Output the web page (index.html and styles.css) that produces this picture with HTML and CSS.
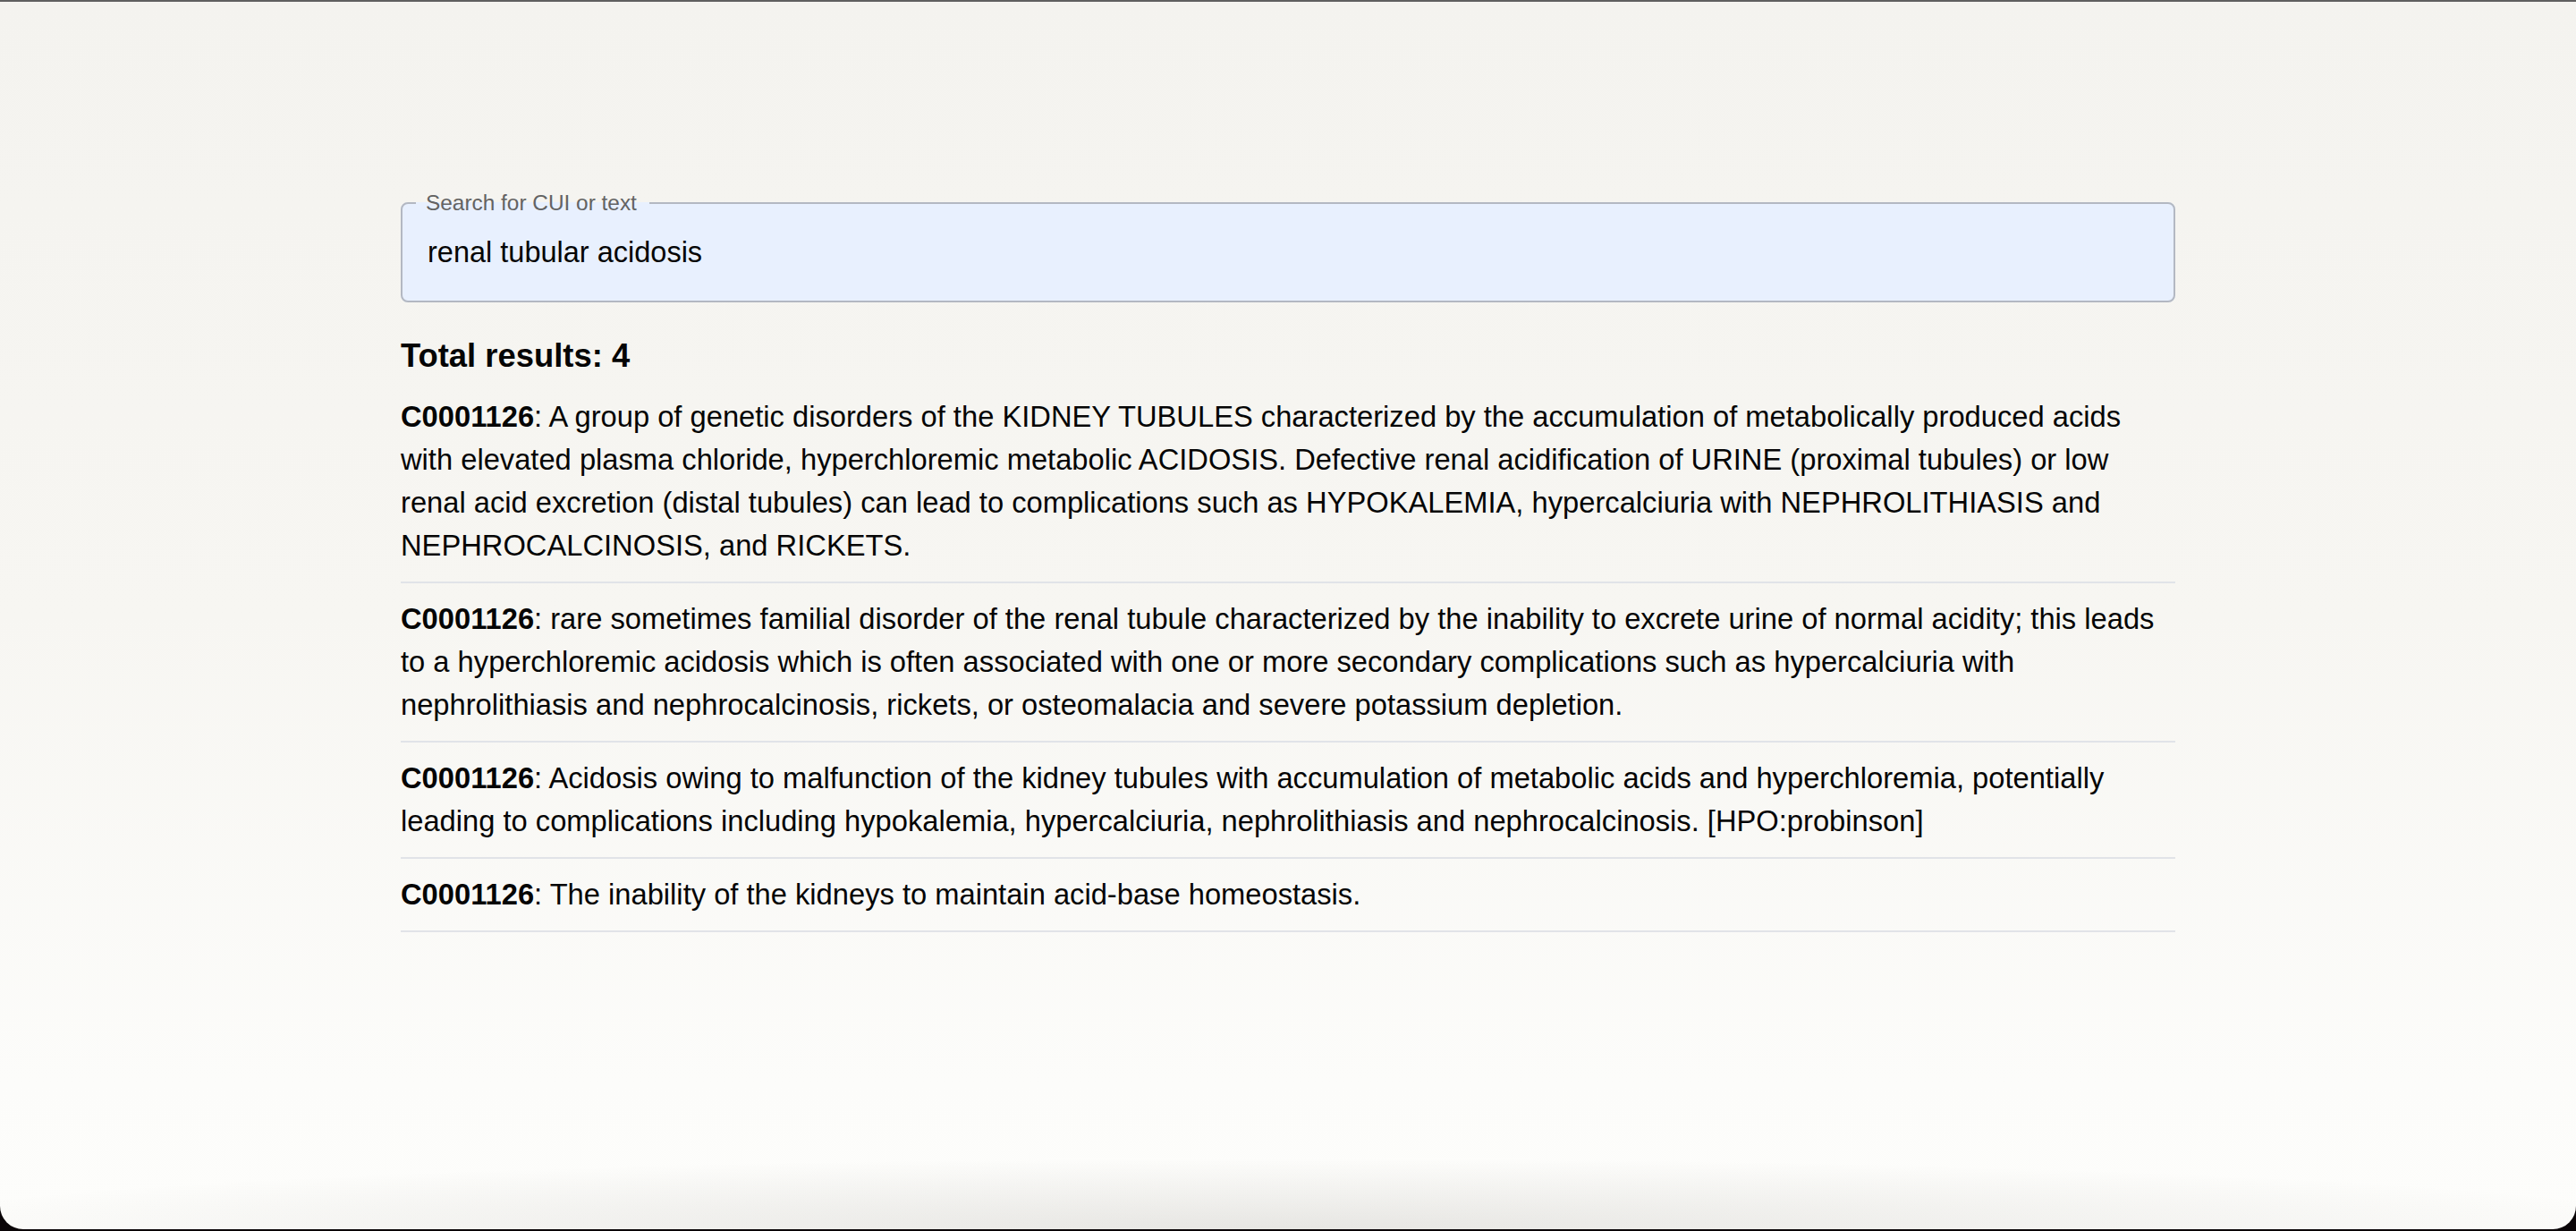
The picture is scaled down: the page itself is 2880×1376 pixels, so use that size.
FILE: index.html
```html
<!DOCTYPE html>
<html lang="en">
<head>
<meta charset="utf-8">
<title>CUI search</title>
<link rel="stylesheet" href="styles.css">
</head>
<body>
<div class="window">
  <main class="page">
    <form class="search">
      <fieldset class="search-field">
        <legend class="search-label">Search for CUI or text</legend>
        <input class="search-input" type="text" value="renal tubular acidosis" aria-label="Search for CUI or text">
      </fieldset>
    </form>
    <h2 class="total">Total results: 4</h2>
    <ul class="results">
      <li class="result"><p class="result-text"><strong>C0001126</strong>: A group of genetic disorders of the KIDNEY TUBULES characterized by the accumulation of metabolically produced acids with elevated plasma chloride, hyperchloremic metabolic ACIDOSIS. Defective renal acidification of URINE (proximal tubules) or low renal acid excretion (distal tubules) can lead to complications such as HYPOKALEMIA, hypercalciuria with NEPHROLITHIASIS and NEPHROCALCINOSIS, and RICKETS.</p></li>
      <li class="result"><p class="result-text"><strong>C0001126</strong>: rare sometimes familial disorder of the renal tubule characterized by the inability to excrete urine of normal acidity; this leads to a hyperchloremic acidosis which is often associated with one or more secondary complications such as hypercalciuria with nephrolithiasis and nephrocalcinosis, rickets, or osteomalacia and severe potassium depletion.</p></li>
      <li class="result"><p class="result-text"><strong>C0001126</strong>: Acidosis owing to malfunction of the kidney tubules with accumulation of metabolic acids and hyperchloremia, potentially leading to complications including hypokalemia, hypercalciuria, nephrolithiasis and nephrocalcinosis. [HPO:probinson]</p></li>
      <li class="result"><p class="result-text"><strong>C0001126</strong>: The inability of the kidneys to maintain acid-base homeostasis.</p></li>
    </ul>
  </main>
</div>
</body>
</html>
```

FILE: styles.css
```css
html, body {
  margin: 0;
  padding: 0;
  background: #0a0507;
}

.window {
  height: calc(100vh - 2px);
  box-sizing: border-box;
  border-top: 2px solid #5f5f5f;
  border-radius: 0 0 26px 26px;
  overflow: hidden;
  background:
    radial-gradient(ellipse 1600px 80px at 50% 100%, rgba(70, 62, 50, 0.12), rgba(70, 62, 50, 0) 100%),
    linear-gradient(180deg, #f4f3ef 0%, #f7f6f2 50%, #fcfcfa 88%, #fdfdfb 100%);
  font-family: "Liberation Sans", Arial, Helvetica, sans-serif;
  color: #050505;
}

.page {
  width: 1984px;
  margin: 0 auto;
  padding-top: 213px;
}

.search {
  margin: 0;
}

.search-field {
  margin: 0;
  min-width: 0;
  padding: 0 28px;
  border: 2px solid #b3b8c2;
  border-radius: 8px;
  background: #e8f0fe;
}

.search-label {
  margin-left: -13px;
  padding: 0 14px 0 11px;
  font-size: 24.4px;
  line-height: 24px;
  color: #636363;
}

.search-input {
  display: block;
  width: 100%;
  box-sizing: content-box;
  height: 46px;
  margin: 0;
  padding: 20px 0 31px;
  border: 0;
  outline: none;
  background: transparent;
  font-family: "Liberation Sans", Arial, Helvetica, sans-serif;
  font-size: 32.5px;
  line-height: 46px;
  color: #050505;
}

.total {
  margin: 32px 0 0;
  font-size: 36.4px;
  line-height: 56px;
  font-weight: 700;
}

.results {
  margin: 0;
  padding: 0;
  list-style: none;
}

.result {
  padding: 16px 14px 16px 0;
  border-bottom: 2px solid #e1e3e8;
}

.result-text {
  margin: 0;
  font-size: 32.7px;
  line-height: 48px;
}

.result-text strong {
  font-weight: 700;
}
```
